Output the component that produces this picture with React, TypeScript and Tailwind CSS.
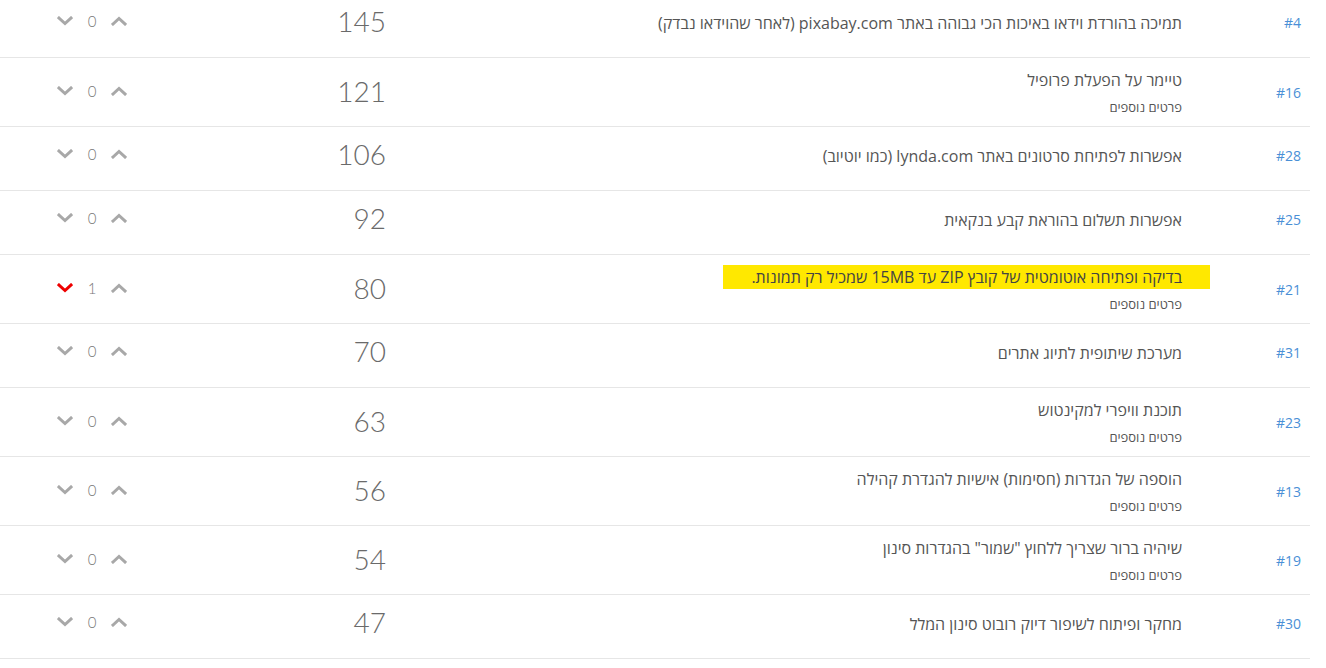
type Row = {
  id: number;
  title: string;
  more?: boolean;
  score: number;
  votes: number;
  voted?: boolean;
  mark?: boolean;
};

const rows: Row[] = [
  { id: 4, title: 'תמיכה בהורדת וידאו באיכות הכי גבוהה באתר pixabay.com (לאחר שהוידאו נבדק)', score: 145, votes: 0 },
  { id: 16, title: 'טיימר על הפעלת פרופיל', more: true, score: 121, votes: 0 },
  { id: 28, title: 'אפשרות לפתיחת סרטונים באתר lynda.com (כמו יוטיוב)', score: 106, votes: 0 },
  { id: 25, title: 'אפשרות תשלום בהוראת קבע בנקאית', score: 92, votes: 0 },
  { id: 21, title: 'בדיקה ופתיחה אוטומטית של קובץ ZIP עד 15MB שמכיל רק תמונות.', more: true, score: 80, votes: 1, voted: true, mark: true },
  { id: 31, title: 'מערכת שיתופית לתיוג אתרים', score: 70, votes: 0 },
  { id: 23, title: 'תוכנת וויפרי למקינטוש', more: true, score: 63, votes: 0 },
  { id: 13, title: 'הוספה של הגדרות (חסימות) אישיות להגדרת קהילה', more: true, score: 56, votes: 0 },
  { id: 19, title: 'שיהיה ברור שצריך ללחוץ "שמור" בהגדרות סינון', more: true, score: 54, votes: 0 },
  { id: 30, title: 'מחקר ופיתוח לשיפור דיוק רובוט סינון המלל', score: 47, votes: 0 },
];

function Chevron({ up, color }: { up?: boolean; color: string }) {
  return (
    <svg width="16" height="10" viewBox="0 0 16 10" className="block">
      <polyline
        points={up ? '2,8 8,2.5 14,8' : '2,2 8,7.5 14,2'}
        fill="none"
        stroke={color}
        strokeWidth="3"
        strokeLinecap="square"
      />
    </svg>
  );
}

export default function App() {
  return (
    <div
      className="w-[1326px] h-[668px] overflow-hidden bg-white"
      style={{ fontFamily: '"Open Sans", "Noto Sans", "Liberation Sans", sans-serif' }}
    >
      <div className="w-[1310px] -mt-[6px]">
        {rows.map((r) => (
          <div
            key={r.id}
            className={
              r.more
                ? 'flex items-center min-h-[64px] py-[10px] border-b border-[#e6e6e6]'
                : 'flex items-center min-h-[64px] pt-[7px] pb-[13px] border-b border-[#e6e6e6]'
            }
          >
            <div className="w-[140px] flex items-center pl-[57px] mb-[3px]">
              <Chevron color={r.voted ? '#ee0000' : '#a8a8a8'} />
              <span className="w-[38px] text-center text-[15px] leading-5 font-light text-[#777] font-[Lato,'Liberation_Sans',sans-serif]">
                {r.votes}
              </span>
              <Chevron up color="#a8a8a8" />
            </div>
            <div className="w-[254px] text-right pr-[8px] mb-[3px] text-[28px] leading-8 font-light text-[#6a6a6a] font-[Lato,'Open_Sans',sans-serif]">
              {r.score}
            </div>
            <div dir="rtl" className="flex-1 pr-[8px] text-right">
              <div className="text-[16px] leading-6 text-[#555]">
                {r.mark ? (
                  <span className="bg-[#ffe800] text-[#444] px-[28px] -mr-[28px] py-[1px]">{r.title}</span>
                ) : (
                  r.title
                )}
              </div>
              {r.more && <div className="mt-[6px] text-[13px] leading-[18px] text-[#555]">פרטים נוספים</div>}
            </div>
            <div className="w-[120px] text-right pr-[9px] text-[14px] text-[#4a8fd6]">#{r.id}</div>
          </div>
        ))}
      </div>
    </div>
  );
}
